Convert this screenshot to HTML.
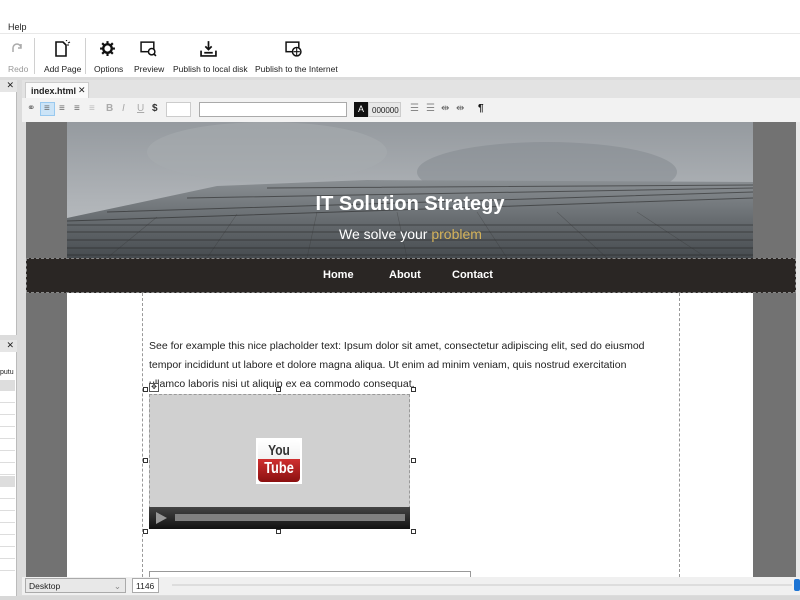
<!DOCTYPE html>
<html><head><meta charset="utf-8"><style>
*{margin:0;padding:0;box-sizing:border-box}
body{width:800px;height:600px;overflow:hidden;background:#fff;font-family:"Liberation Sans",sans-serif;font-size:9px;color:#222;position:relative}
.abs{position:absolute}
.tb{position:absolute;top:64px;font-size:8.5px;color:#222;text-align:center;white-space:nowrap}
.ico{position:absolute;top:40px}
.sep{position:absolute;top:38px;width:1px;height:36px;background:#d0d0d0}
.fi{position:absolute;top:103px;font-size:10px;color:#666}
.h{position:absolute;width:5px;height:5px;border:1px solid #333;background:#fff}
.row{position:absolute;left:0;width:15px;height:11px;border-bottom:1px solid #ddd}
</style></head><body>
<div class="abs" style="left:8px;top:22px;font-size:9px">Help</div>
<div class="abs" style="left:0;top:33px;width:800px;height:1px;background:#e8e8e8"></div>
<!-- toolbar -->
<svg class="ico" style="left:10px" width="16" height="16" viewBox="0 0 16 16"><path d="M3 12V8a4 4 0 0 1 8 0M11 4v4h-3" fill="none" stroke="#aaa" stroke-width="1.5"/></svg>
<div class="tb" style="left:8px;color:#999">Redo</div>
<div class="sep" style="left:34px"></div>
<svg class="ico" style="left:53px" width="18" height="18" viewBox="0 0 18 18"><path d="M3 2h7l3 3v11H3z" fill="none" stroke="#111" stroke-width="1.6"/><path d="M13 1l1-1M15 3l2-1M14 5h2" stroke="#111"/></svg>
<div class="tb" style="left:44px">Add Page</div>
<div class="sep" style="left:85px"></div>
<svg class="ico" style="left:99px" width="17" height="17" viewBox="0 0 16 16"><circle cx="8" cy="8" r="4" fill="none" stroke="#111" stroke-width="2.2"/><path d="M8 1v3M8 12v3M1 8h3M12 8h3M3 3l2 2M11 11l2 2M3 13l2-2M11 5l2-2" stroke="#111" stroke-width="2"/></svg>
<div class="tb" style="left:94px">Options</div>
<svg class="ico" style="left:140px" width="17" height="17" viewBox="0 0 16 16"><rect x="1" y="2" width="12" height="9" fill="none" stroke="#111" stroke-width="1.4"/><circle cx="11" cy="11" r="3" fill="#fff" stroke="#111" stroke-width="1.4"/><path d="M13 13l2 2" stroke="#111" stroke-width="1.5"/></svg>
<div class="tb" style="left:134px">Preview</div>
<svg class="ico" style="left:200px" width="17" height="17" viewBox="0 0 16 16"><path d="M8 1v8M5 6l3 3 3-3M1 10v5h14v-5M4 12h8" fill="none" stroke="#111" stroke-width="1.6"/></svg>
<div class="tb" style="left:173px">Publish to local disk</div>
<svg class="ico" style="left:285px" width="17" height="17" viewBox="0 0 16 16"><rect x="1" y="2" width="12" height="9" fill="none" stroke="#111" stroke-width="1.4"/><circle cx="11" cy="11" r="4" fill="#fff" stroke="#111" stroke-width="1.4"/><path d="M8 11h6M11 7v8" stroke="#111"/></svg>
<div class="tb" style="left:255px">Publish to the Internet</div>
<!-- gray frame -->
<div class="abs" style="left:0;top:77px;width:800px;height:523px;background:#dcdcdc"></div>
<!-- left panel -->
<div class="abs" style="left:0;top:80px;width:17px;height:12px;background:#e6e6e6;font-size:9px;text-align:right;padding-right:3px">✕</div>
<div class="abs" style="left:0;top:92px;width:17px;height:243px;background:#fff;border-right:1px solid #bbb"></div>
<div class="abs" style="left:0;top:340px;width:17px;height:12px;background:#e6e6e6;font-size:9px;text-align:right;padding-right:3px">✕</div>
<div class="abs" style="left:0;top:352px;width:17px;height:245px;background:#fff;border-right:1px solid #bbb;overflow:hidden">
<div class="abs" style="left:0;top:17px;font-size:7px">putu</div>
<div class="row" style="top:28px;background:#ddd"></div>
<div class="row" style="top:40px"></div><div class="row" style="top:52px"></div><div class="row" style="top:64px"></div><div class="row" style="top:76px"></div><div class="row" style="top:88px"></div><div class="row" style="top:100px"></div><div class="row" style="top:112px"></div>
<div class="row" style="top:124px;background:#ddd"></div>
<div class="row" style="top:136px"></div><div class="row" style="top:148px"></div><div class="row" style="top:160px"></div><div class="row" style="top:172px"></div><div class="row" style="top:184px"></div><div class="row" style="top:196px"></div><div class="row" style="top:208px"></div>
</div>
<!-- editor -->
<div class="abs" style="left:22px;top:80px;width:778px;height:18px;background:#e3e3e3"></div>
<div class="abs" style="left:25px;top:82px;width:64px;height:17px;background:#fafafa;border:1px solid #ccc;border-bottom:none;font-size:9px;font-weight:bold;padding:3px 0 0 5px;white-space:nowrap">index.html</div>
<div class="abs" style="left:78px;top:85px;font-size:9px">✕</div>
<div class="abs" style="left:22px;top:98px;width:778px;height:24px;background:#f2f2f2"></div>
<div class="abs" style="left:40px;top:102px;width:15px;height:14px;background:#cce4f7;border:1px solid #99c9ef"></div>
<div class="fi" style="left:27px">⚭</div><div class="fi" style="left:44px">≡</div><div class="fi" style="left:59px">≡</div><div class="fi" style="left:74px">≡</div><div class="fi" style="left:89px;color:#bbb">≡</div>
<div class="fi" style="left:106px;color:#aaa;font-weight:bold">B</div><div class="fi" style="left:122px;color:#aaa;font-style:italic">I</div><div class="fi" style="left:137px;color:#aaa;text-decoration:underline">U</div><div class="fi" style="left:152px;font-weight:bold;color:#333">$</div>
<div class="abs" style="left:166px;top:102px;width:25px;height:15px;border:1px solid #ccc;background:#fff"></div>
<div class="abs" style="left:199px;top:102px;width:148px;height:15px;border:1px solid #aaa;background:#fff"></div>
<div class="abs" style="left:354px;top:102px;width:14px;height:15px;background:#111;color:#fff;font-size:9px;text-align:center;padding-top:2px">A</div>
<div class="abs" style="left:368px;top:102px;width:33px;height:15px;border:1px solid #ccc;background:#e8e8e8;font-size:8px;padding:3px 0 0 3px">000000</div>
<div class="fi" style="left:410px;color:#888">☰</div><div class="fi" style="left:426px;color:#888">☰</div><div class="fi" style="left:441px">⇹</div><div class="fi" style="left:456px">⇹</div><div class="fi" style="left:478px;font-weight:bold;color:#111">¶</div>
<!-- canvas -->
<div class="abs" style="left:26px;top:122px;width:770px;height:455px;background:#727272"></div>
<div class="abs" style="left:796px;top:122px;width:4px;height:455px;background:#e8e8e8"></div>
<svg class="abs" style="left:67px;top:122px" width="686" height="136" viewBox="0 0 686 136">
<defs><linearGradient id="sky" x1="0" y1="0" x2="0" y2="1"><stop offset="0" stop-color="#959a9f"/><stop offset="0.6" stop-color="#b0b4b8"/><stop offset="1" stop-color="#bdc0c3"/></linearGradient>
<linearGradient id="bd" x1="0" y1="0" x2="0" y2="1"><stop offset="0" stop-color="#8a8f93"/><stop offset="1" stop-color="#464b4f"/></linearGradient></defs>
<rect width="686" height="136" fill="url(#sky)"/>
<ellipse cx="200" cy="30" rx="120" ry="30" fill="#a6abaf" opacity=".6"/>
<ellipse cx="480" cy="50" rx="130" ry="30" fill="#82888d" opacity=".5"/>
<path d="M0 96 L150 64 L300 58 L686 60 L686 136 L0 136Z" fill="url(#bd)"/>
<g stroke="#222" stroke-width="1" opacity=".55"><path d="M0 103H686M0 110H686M0 118H686M0 126H686M0 133H686M0 99L686 76M40 90L686 70M120 76L686 66M200 66L686 63"/></g>
<g stroke="#333" stroke-width=".6" opacity=".4"><path d="M40 136L90 95M140 136L170 92M240 136L250 90M340 136L330 90M440 136L410 90M540 136L490 90M640 136L570 90"/></g>
<text x="343" y="88" text-anchor="middle" font-family="Liberation Sans" font-weight="bold" font-size="20" fill="#fff">IT Solution Strategy</text>
<text x="272" y="117" font-family="Liberation Sans" font-size="14" fill="#fff">We solve your <tspan fill="#d4b25a">problem</tspan></text>
</svg>
<div class="abs" style="left:26px;top:258px;width:770px;height:35px;background:#2a2624;border:1px dashed #888;color:#fff;font-weight:bold;font-size:11px">
<span class="abs" style="left:296px;top:10px">Home</span><span class="abs" style="left:362px;top:10px">About</span><span class="abs" style="left:425px;top:10px">Contact</span></div>
<div class="abs" style="left:67px;top:293px;width:686px;height:284px;background:#fff"></div>
<div class="abs" style="left:142px;top:293px;width:1px;height:284px;border-left:1px dashed #999"></div>
<div class="abs" style="left:679px;top:293px;width:1px;height:284px;border-left:1px dashed #999"></div>
<div class="abs" style="left:149px;top:337px;width:497px;font-size:10.5px;line-height:19px;color:#222">See for example this nice placholder text: Ipsum dolor sit amet, consectetur adipiscing elit, sed do eiusmod tempor incididunt ut labore et dolore magna aliqua. Ut enim ad minim veniam, quis nostrud exercitation ullamco laboris nisi ut aliquip ex ea commodo consequat.</div>
<div class="abs" style="left:149px;top:394px;width:261px;height:135px;background:#d0d0d0;border:1px dashed #999"></div>
<div class="abs" style="left:149px;top:507px;width:261px;height:22px;background:linear-gradient(#444,#111)"></div>
<svg class="abs" style="left:154px;top:511px" width="14" height="14"><path d="M2 1L13 7L2 13Z" fill="#999"/></svg>
<div class="abs" style="left:175px;top:514px;width:230px;height:7px;background:#808080"></div>
<div class="abs" style="left:256px;top:438px;width:46px;height:46px;background:#fff">
<div class="abs" style="left:2px;top:2px;width:42px;height:42px;border-radius:4px;background:linear-gradient(#fff 0,#f2f2f2 45%,#d03030 45%,#8a1010 100%)"></div>
<div class="abs" style="left:0;top:3px;width:46px;text-align:center;font-size:15px;font-weight:bold;color:#333;line-height:19px;transform:scaleX(.8)">You</div>
<div class="abs" style="left:0;top:21px;width:46px;text-align:center;font-size:16px;font-weight:bold;color:#fff;line-height:20px;transform:scaleX(.8)">Tube</div></div>
<div class="h" style="left:143px;top:387px"></div><div class="h" style="left:276px;top:387px"></div><div class="h" style="left:411px;top:387px"></div>
<div class="h" style="left:143px;top:458px"></div><div class="h" style="left:411px;top:458px"></div>
<div class="h" style="left:143px;top:529px"></div><div class="h" style="left:276px;top:529px"></div><div class="h" style="left:411px;top:529px"></div>
<div class="abs" style="left:149px;top:383px;width:10px;height:9px;border:1px solid #555;background:#fff;font-size:7px;line-height:7px;text-align:center">✥</div>
<div class="abs" style="left:149px;top:571px;width:322px;height:6px;border:1px solid #999;border-bottom:none"></div>
<!-- bottom bar -->
<div class="abs" style="left:22px;top:577px;width:778px;height:18px;background:#f0f0f0"></div>
<div class="abs" style="left:25px;top:578px;width:101px;height:15px;border:1px solid #aaa;background:#e8e8e8;font-size:8.5px;padding:2px 0 0 3px">Desktop<span style="position:absolute;right:4px;color:#888">⌄</span></div>
<div class="abs" style="left:132px;top:578px;width:27px;height:15px;border:1px solid #aaa;background:#fff;font-size:8.5px;padding:2px 0 0 3px">1146</div>
<div class="abs" style="left:172px;top:584px;width:620px;height:2px;background:#ddd"></div>
<div class="abs" style="left:794px;top:579px;width:6px;height:12px;background:#1c74d4;border-radius:2px"></div>
<div class="abs" style="left:0;top:596px;width:800px;height:4px;background:#d8d8d8"></div>
</body></html>
